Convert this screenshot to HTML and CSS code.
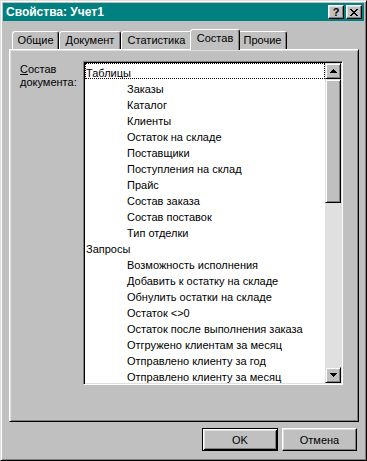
FILE: index.html
```html
<!DOCTYPE html>
<html lang="ru">
<head>
  <meta charset="UTF-8" />
  <title>Свойства: Учет1</title>
  <link rel="stylesheet" href="styles.css">
</head>
<body>

  <div class="window">

    <!-- Title bar -->
    <div class="titlebar">
      <span class="title">Свойства: Учет1</span>
      <span class="title-btn">?</span>
      <span class="title-btn close">
        <svg width="8" height="7" viewBox="0 0 8 7"><path d="M0 0h2v1H0zM6 0h2v1H6zM1 1h2v1H1zM5 1h2v1H5zM2 2h4v1H2zM3 3h2v1H3zM2 4h4v1H2zM1 5h2v1H1zM5 5h2v1H5zM0 6h2v1H0zM6 6h2v1H6z"/></svg>
      </span>
    </div>

    <!-- Tabs -->
    <div class="tabs">
      <div class="tab tab-general">Общие</div>
      <div class="tab tab-doc">Документ</div>
      <div class="tab tab-stat">Статистика</div>
      <div class="tab tab-contents active">Состав</div>
      <div class="tab tab-other">Прочие</div>
    </div>

    <div class="panel">
      <div class="field-label"><u>С</u>остав документа:</div>

      <div class="listbox">
        <div class="items">
          <div class="item focus">Таблицы</div>
          <div class="item sub">Заказы</div>
          <div class="item sub">Каталог</div>
          <div class="item sub">Клиенты</div>
          <div class="item sub">Остаток на складе</div>
          <div class="item sub">Поставщики</div>
          <div class="item sub">Поступления на склад</div>
          <div class="item sub">Прайс</div>
          <div class="item sub">Состав заказа</div>
          <div class="item sub">Состав поставок</div>
          <div class="item sub">Тип отделки</div>
          <div class="item">Запросы</div>
          <div class="item sub">Возможность исполнения</div>
          <div class="item sub">Добавить к остатку на складе</div>
          <div class="item sub">Обнулить остатки на складе</div>
          <div class="item sub">Остаток &lt;&gt;0</div>
          <div class="item sub">Остаток после выполнения заказа</div>
          <div class="item sub">Отгружено клиентам за месяц</div>
          <div class="item sub">Отправлено клиенту за год</div>
          <div class="item sub">Отправлено клиенту за месяц</div>
        </div>

        <div class="scrollbar">
          <div class="sb-btn">
            <svg width="7" height="4" viewBox="0 0 7 4"><path d="M3 0h1v1h1v1h1v1h1v1H0V3h1V2h1V1h1z"/></svg>
          </div>
          <div class="thumb"></div>
          <div class="track"></div>
          <div class="sb-btn">
            <svg width="7" height="4" viewBox="0 0 7 4"><path d="M0 0h7v1H6v1H5v1H4v1H3V3H2V2H1V1H0z"/></svg>
          </div>
        </div>
      </div>
    </div>

    <!-- Dialog buttons -->
    <div class="buttons">
      <button class="btn default">OK</button>
      <button class="btn">Отмена</button>
    </div>

  </div>

</body>
</html>
```

FILE: styles.css
```css
body {
  margin: 0;
  background-color: #c0c0c0;
  font-family: "Liberation Sans", Arial, sans-serif;
  font-size: 11px;
  color: #000;
}

.window {
  box-sizing: border-box;
  width: 367px;
  height: 461px;
  padding: 2px;
  border: 1px solid;
  border-color: #dfdfdf #000 #000 #dfdfdf;
  box-shadow: inset 1px 1px #fff, inset -1px -1px #808080;
  background-color: #c0c0c0;
  display: flex;
  flex-direction: column;
}

.titlebar {
  height: 18px;
  padding-left: 3px;
  background-color: #008080;
  color: #fff;
  display: flex;
  align-items: center;
}

.title {
  flex: 1;
  font-size: 12px;
  font-weight: bold;
}

.title-btn {
  box-sizing: border-box;
  width: 16px;
  height: 14px;
  margin-left: 2px;
  border: 1px solid;
  border-color: #fff #000 #000 #fff;
  box-shadow: inset -1px -1px #808080, inset 1px 1px #dfdfdf;
  background-color: #c0c0c0;
  color: #000;
  font-size: 11px;
  font-weight: bold;
  line-height: 12px;
  display: flex;
  align-items: center;
  justify-content: center;
}

.title-btn.close {
  margin-right: 2px;
}

.tabs {
  height: 20px;
  margin-top: 8px;
  padding-left: 9px;
  display: flex;
  align-items: flex-end;
}

.tab {
  box-sizing: border-box;
  height: 18px;
  padding-top: 2px;
  border: 1px solid #fff;
  border-bottom: none;
  border-right-color: #000;
  border-radius: 3px 3px 0 0;
  box-shadow: inset -1px 0 #808080;
  background-color: #c0c0c0;
  line-height: 13px;
  text-align: center;
}

.tab-general { width: 47px; }
.tab-doc { width: 62px; }
.tab-stat { width: 71px; }
.tab-contents { width: 46px; }
.tab-other { width: 49px; }

.tab.active {
  width: 50px;
  height: 21px;
  margin: 0 -2px -1px;
  position: relative;
  z-index: 1;
}

.panel {
  box-sizing: border-box;
  width: 350px;
  height: 373px;
  margin-left: 6px;
  padding: 11px 0 0 10px;
  border: 1px solid;
  border-color: #fff #000 #000 #fff;
  box-shadow: inset 1px 1px #dfdfdf, inset -1px -1px #808080;
  display: flex;
  align-items: flex-start;
}

.field-label {
  width: 63px;
  margin-top: 2px;
  line-height: 13px;
}

.listbox {
  box-sizing: border-box;
  width: 260px;
  height: 324px;
  padding: 1px;
  border: 1px solid;
  border-color: #808080 #fff #fff #808080;
  box-shadow: inset 1px 1px #000, inset -1px -1px #dfdfdf;
  background-color: #fff;
  display: flex;
}

.items {
  flex: 1;
  overflow: hidden;
}

.item {
  box-sizing: border-box;
  height: 16px;
  padding: 5px 0 0 1px;
  line-height: 11px;
  white-space: nowrap;
}

.item.sub {
  padding-left: 42px;
}

.item.focus {
  outline: 1px dotted #000;
  outline-offset: -1px;
}

.scrollbar {
  width: 16px;
  display: flex;
  flex-direction: column;
}

.sb-btn,
.thumb {
  box-sizing: border-box;
  border: 1px solid;
  border-color: #dfdfdf #000 #000 #dfdfdf;
  box-shadow: inset 1px 1px #fff, inset -1px -1px #808080;
  background-color: #c0c0c0;
}

.sb-btn {
  height: 16px;
  display: flex;
  align-items: center;
  justify-content: center;
}

.thumb {
  height: 124px;
}

.track {
  flex: 1;
  background-color: #e0e0e0;
}

.buttons {
  margin-top: 6px;
  padding-right: 7px;
  display: flex;
  justify-content: flex-end;
  gap: 4px;
}

.btn {
  box-sizing: border-box;
  width: 75px;
  height: 23px;
  padding: 0;
  border: 1px solid;
  border-color: #fff #000 #000 #fff;
  box-shadow: inset -1px -1px #808080, inset 1px 1px #dfdfdf;
  background-color: #c0c0c0;
  color: #000;
  font: inherit;
}

.btn.default {
  width: 76px;
  border-color: #000;
  box-shadow: inset 1px 1px #fff, inset -1px -1px #000, inset 2px 2px #dfdfdf, inset -2px -2px #808080;
}
```
